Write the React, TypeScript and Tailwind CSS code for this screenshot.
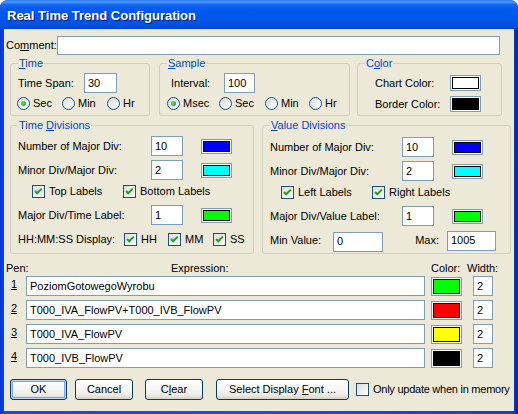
import React from "react";

// XP-style "Real Time Trend Configuration" dialog

type Kids = { children?: React.ReactNode };

const U = ({ children }: Kids) => <span className="underline">{children}</span>;

const Field = ({ value = "", className = "" }: { value?: string; className?: string }) => (
  <div className={"flex items-center border border-[#7F9DB9] bg-white pl-[3px] leading-none " + className}>
    {value}
  </div>
);

const Swatch = ({ fill, className = "" }: { fill: string; className?: string }) => (
  <div className={"border border-[#7F9DB9] bg-white p-[1px] " + className}>
    <div className={"h-full w-full border border-black " + fill} />
  </div>
);

const Radio = ({ checked = false, label, className = "" }: { checked?: boolean; label: string; className?: string }) => (
  <div className={"flex items-center h-[13px] " + className}>
    <div className="w-[13px] h-[13px] rounded-full border border-[#1C5180] bg-[linear-gradient(135deg,#DCDCD7,#FFFFFF)] flex items-center justify-center shrink-0">
      {checked && <div className="w-[5px] h-[5px] rounded-full bg-[radial-gradient(circle_at_40%_40%,#6CE06C,#21A121_75%)]" />}
    </div>
    <span className="ml-[3px] leading-none">{label}</span>
  </div>
);

const Check = ({ checked = true, label, className = "" }: { checked?: boolean; label: React.ReactNode; className?: string }) => (
  <div className={"flex items-center h-[13px] " + className}>
    <div className="w-[13px] h-[13px] border border-[#1C5180] bg-[linear-gradient(135deg,#DCDCD7,#FFFFFF)] shrink-0">
      {checked && (
        <svg width="11" height="11" viewBox="0 0 11 11">
          <path d="M2 5 L4.2 7.3 L8.8 2.6" fill="none" stroke="#21A121" strokeWidth="2" />
        </svg>
      )}
    </div>
    <span className="ml-[4px] leading-none whitespace-nowrap">{label}</span>
  </div>
);

const Group = ({ title, className = "", children }: Kids & { title: React.ReactNode; className?: string }) => (
  <div className={"relative shrink-0 rounded-[3px] border border-[#D0D0BF] " + className}>
    <span className="absolute -top-[7px] left-[7px] bg-[#ECE9D8] px-[1px] leading-[13px] text-[#0046D5]">{title}</span>
    {children}
  </div>
);

const Btn = ({ children, className = "", def = false }: Kids & { className?: string; def?: boolean }) => (
  <div
    className={
      "h-[21px] flex items-center justify-center rounded-[3px] border border-[#003C74] bg-[linear-gradient(to_bottom,#FFFFFF_0%,#F6F6F3_45%,#ECEBE6_80%,#D6D0C5_100%)] leading-none " +
      (def ? "shadow-[inset_0_0_0_1px_#B9D1F6,inset_0_0_0_2px_#7FA4EA] " : "") +
      className
    }
  >
    <span className="whitespace-nowrap">{children}</span>
  </div>
);

const DivRow = ({ label, value, fill, labelW, className = "" }: { label: string; value: string; fill: string; labelW: string; className?: string }) => (
  <div className={"flex items-center h-[20px] pl-[7px] " + className}>
    <span className={"leading-none " + labelW}>{label}</span>
    <Field value={value} className="w-[32px] h-[20px]" />
    <Swatch fill={fill} className="ml-[18px] w-[31px] h-[15px]" />
  </div>
);

const pens = [
  { n: "1", expr: "PoziomGotowegoWyrobu", fill: "bg-[#00FF00]" },
  { n: "2", expr: "T000_IVA_FlowPV+T000_IVB_FlowPV", fill: "bg-[#FF0000]" },
  { n: "3", expr: "T000_IVA_FlowPV", fill: "bg-[#FFFF00]" },
  { n: "4", expr: "T000_IVB_FlowPV", fill: "bg-[#000000]" },
];

export default function App() {
  return (
    <div className="w-[518px] h-[414px] bg-white font-['Liberation_Sans',Arial,sans-serif] text-[11px] text-black">
      <div className="w-[518px] h-[414px] rounded-t-[8px] overflow-hidden flex flex-col bg-[linear-gradient(to_right,#0831D9,#0054E3_1%,#0058EE_50%,#0048D8_99%,#001EA0)]">
        {/* title bar */}
        <div className="h-[29px] shrink-0 flex items-center pl-[7px] pt-[2px] bg-[linear-gradient(to_bottom,#2E7BF2_0%,#4A97FA_7%,#1167F0_16%,#0058EE_35%,#0056E8_70%,#0050DC_90%,#0043C6_100%)]">
          <span className="text-[13px] font-bold text-white leading-none [text-shadow:1px_1px_0_#0A1883]">
            Real Time Trend Configuration
          </span>
        </div>

        {/* client */}
        <div className="mx-[4px] w-[510px] h-[382px] bg-[#ECE9D8] flex flex-col">
          <div className="mt-[7px] flex items-center h-[19px] pl-[2px]">
            <span className="w-[51px] leading-none">Co<U>m</U>ment:</span>
            <Field className="w-[443px] h-[19px]" />
          </div>

          <div className="mt-[8px] flex pl-[6px]">
            <Group title={<><U>T</U>ime</>} className="w-[140px] h-[53px]">
              <div className="pt-[9px]">
                <div className="flex items-center h-[20px] pl-[7px]">
                  <span className="w-[66px] leading-none">Time Span:</span>
                  <Field value="30" className="w-[33px] h-[20px]" />
                </div>
                <div className="mt-[4px] flex pl-[6px]">
                  <Radio checked label="Sec" className="w-[45px]" />
                  <Radio label="Min" className="w-[45px]" />
                  <Radio label="Hr" />
                </div>
              </div>
            </Group>
            <Group title={<><U>S</U>ample</>} className="ml-[9px] w-[191px] h-[53px]">
              <div className="pt-[9px]">
                <div className="flex items-center h-[20px] pl-[11px]">
                  <span className="w-[53px] leading-none">Interval:</span>
                  <Field value="100" className="w-[31px] h-[20px]" />
                </div>
                <div className="mt-[4px] flex pl-[7px]">
                  <Radio checked label="Msec" className="w-[52px]" />
                  <Radio label="Sec" className="w-[46px]" />
                  <Radio label="Min" className="w-[44px]" />
                  <Radio label="Hr" />
                </div>
              </div>
            </Group>
            <Group title={<>C<U>o</U>lor</>} className="ml-[7px] w-[145px] h-[53px]">
              <div className="pt-[11px]">
                <div className="flex items-center h-[16px] pl-[17px]">
                  <span className="w-[75px] leading-none">Chart Color:</span>
                  <Swatch fill="bg-white" className="w-[31px] h-[16px]" />
                </div>
                <div className="mt-[5px] flex items-center h-[16px] pl-[17px]">
                  <span className="w-[75px] leading-none">Border Color:</span>
                  <Swatch fill="bg-black" className="w-[31px] h-[16px]" />
                </div>
              </div>
            </Group>
          </div>

          <div className="mt-[9px] flex pl-[6px]">
            <Group title={<>Time <U>D</U>ivisions</>} className="w-[244px] h-[129px]">
              <div className="pt-[10px]">
                <DivRow label="Number of Major Div:" value="10" fill="bg-[#0000FF]" labelW="w-[133px]" />
                <DivRow label="Minor Div/Major Div:" value="2" fill="bg-[#00FFFF]" labelW="w-[133px]" className="mt-[4px]" />
                <div className="mt-[5px] flex pl-[21px]">
                  <Check label="Top Labels" className="w-[91px]" />
                  <Check label="Bottom Labels" />
                </div>
                <DivRow label="Major Div/Time Label:" value="1" fill="bg-[#00FF00]" labelW="w-[133px]" className="mt-[7px]" />
                <div className="mt-[4px] flex items-center h-[20px] pl-[7px]">
                  <span className="w-[106px] leading-none">HH:MM:SS Display:</span>
                  <Check label="HH" className="w-[44px]" />
                  <Check label="MM" className="w-[45px]" />
                  <Check label="SS" />
                </div>
              </div>
            </Group>
            <Group title={<><U>V</U>alue Divisions</>} className="ml-[8px] w-[249px] h-[129px]">
              <div className="pt-[11px]">
                <DivRow label="Number of Major Div:" value="10" fill="bg-[#0000FF]" labelW="w-[132px]" />
                <DivRow label="Minor Div/Major Div:" value="2" fill="bg-[#00FFFF]" labelW="w-[132px]" className="mt-[4px]" />
                <div className="mt-[5px] flex pl-[18px]">
                  <Check label="Left Labels" className="w-[91px]" />
                  <Check label="Right Labels" />
                </div>
                <DivRow label="Major Div/Value Label:" value="1" fill="bg-[#00FF00]" labelW="w-[132px]" className="mt-[7px]" />
                <div className="mt-[4px] flex items-center h-[21px] pl-[7px]">
                  <span className="w-[63px] leading-none">Min Value:</span>
                  <Field value="0" className="w-[50px] h-[20px] mt-[2px]" />
                  <span className="w-[64px] pr-[8px] text-right leading-none">Max:</span>
                  <Field value="1005" className="w-[49px] h-[20px]" />
                </div>
              </div>
            </Group>
          </div>

          <div className="mt-[7px] h-[14px] flex items-center pl-[2px]">
            <span className="w-[165px] leading-none">Pen:</span>
            <span className="w-[260px] leading-none">Expression:</span>
            <span className="w-[36px] leading-none">Color:</span>
            <span className="leading-none">Width:</span>
          </div>

          <div className="mt-[1px] flex flex-col gap-[4px]">
            {pens.map((p) => (
              <div key={p.n} className="flex items-center h-[20px]">
                <span className="w-[22px] pl-[7px] leading-none -mt-[3px]">
                  <U>{p.n}</U>
                </span>
                <Field value={p.expr} className="w-[399px] h-[20px]" />
                <Swatch fill={p.fill} className="ml-[6px] w-[31px] h-[19px]" />
                <Field value="2" className="ml-[11px] w-[20px] h-[20px]" />
              </div>
            ))}
          </div>

          <div className="mt-[11px] flex items-center pl-[6px]">
            <Btn def className="w-[57px]">OK</Btn>
            <Btn className="ml-[8px] w-[58px]">Cancel</Btn>
            <Btn className="ml-[12px] w-[58px]">C<U>l</U>ear</Btn>
            <Btn className="ml-[13px] w-[133px]">Select Display <U>F</U>ont ...</Btn>
            <Check
              checked={false}
              label={<span className="tracking-[-0.25px]">Only update when in memory</span>}
              className="ml-[7px]"
            />
          </div>
        </div>
      </div>
    </div>
  );
}
